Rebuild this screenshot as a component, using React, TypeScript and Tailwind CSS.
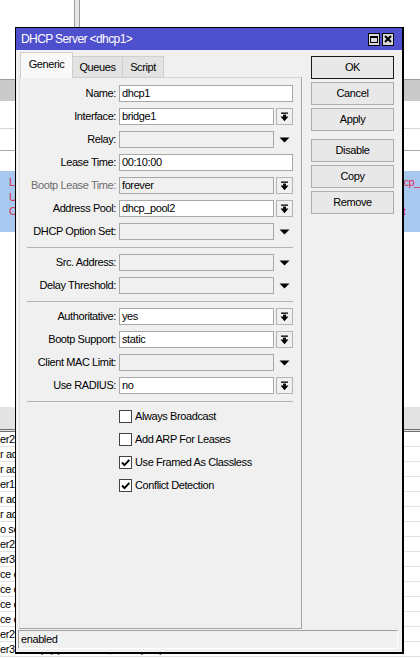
import React from "react";

type Control = "text" | "pick" | "open";
type Item =
  | { kind: "field"; label: string; value?: string; control: Control; off?: boolean; dim?: boolean }
  | { kind: "sep" };

const items: Item[] = [
  { kind: "field", label: "Name", value: "dhcp1", control: "text" },
  { kind: "field", label: "Interface", value: "bridge1", control: "pick" },
  { kind: "field", label: "Relay", control: "open" },
  { kind: "field", label: "Lease Time", value: "00:10:00", control: "text" },
  { kind: "field", label: "Bootp Lease Time", value: "forever", control: "pick", off: true, dim: true },
  { kind: "field", label: "Address Pool", value: "dhcp_pool2", control: "pick" },
  { kind: "field", label: "DHCP Option Set", control: "open" },
  { kind: "sep" },
  { kind: "field", label: "Src. Address", control: "open" },
  { kind: "field", label: "Delay Threshold", control: "open" },
  { kind: "sep" },
  { kind: "field", label: "Authoritative", value: "yes", control: "pick" },
  { kind: "field", label: "Bootp Support", value: "static", control: "pick" },
  { kind: "field", label: "Client MAC Limit", control: "open" },
  { kind: "field", label: "Use RADIUS", value: "no", control: "pick" },
  { kind: "sep" },
];

const flags = [
  { label: "Always Broadcast", on: false },
  { label: "Add ARP For Leases", on: false },
  { label: "Use Framed As Classless", on: true },
  { label: "Conflict Detection", on: true },
];

const logRows = [
  "er2 link up (speed 100M, full duplex)",
  "r added by admin",
  "r added by admin",
  "er1 link up (speed 100M, full duplex)",
  "r added by admin",
  "r added by admin",
  "o settings changed by admin",
  "er2 link down",
  "er3 link down",
  "ce changed by admin",
  "ce changed by admin",
  "ce changed by admin",
  "ce changed by admin",
  "er2 link up (speed 100M, full duplex)",
  "er3 link up (speed 100M, full duplex)",
];

function PickIcon() {
  return (
    <svg width="9" height="10" viewBox="0 0 9 10" className="fill-black">
      <rect x="1" y="0.5" width="7" height="1.3" />
      <rect x="3" y="2.6" width="3" height="2.2" />
      <path d="M0.5 4.6h8L4.5 9.2z" />
    </svg>
  );
}

function Tri() {
  return (
    <svg width="11" height="6" viewBox="0 0 11 6" className="fill-black">
      <path d="M0.5 0.5h10L5.5 5.5z" />
    </svg>
  );
}

function Check() {
  return (
    <svg width="11" height="11" viewBox="0 0 11 11">
      <path d="M2 5.5l2.5 2.6L9.3 2.8" fill="none" stroke="black" strokeWidth="2" />
    </svg>
  );
}

function FieldRow({ f }: { f: Extract<Item, { kind: "field" }> }) {
  const white = f.control === "text" || (f.control === "pick" && !f.off);
  return (
    <div className="flex h-[17px] items-center">
      <span className={`w-[96px] shrink-0 whitespace-nowrap text-right ${f.dim ? "text-[#6d6d6d]" : "text-black"}`}>
        {f.label}:
      </span>
      <div className="ml-[3px] flex w-[174px] gap-[2px]">
        <div
          className={`h-[17px] min-w-0 flex-1 border border-[#a8a8a8] px-[2px] leading-[15px] ${
            white ? "bg-white" : "bg-[#f0f0f0]"
          }`}
        >
          {f.value}
        </div>
        {f.control === "pick" && (
          <div className="grid h-[17px] w-[17px] place-items-center border border-[#b4b4b4] bg-[#f0f0f0]">
            <PickIcon />
          </div>
        )}
        {f.control === "open" && (
          <div className="grid h-[17px] w-[17px] place-items-center">
            <Tri />
          </div>
        )}
      </div>
    </div>
  );
}

function Btn({ label, main, className = "" }: { label: string; main?: boolean; className?: string }) {
  return (
    <div
      className={`grid h-[23px] w-[83px] place-items-center border bg-[#e8e8e8] leading-none ${
        main ? "border-[#1a1a1a]" : "border-[#adadad]"
      } ${className}`}
    >
      {label}
    </div>
  );
}

function Dialog() {
  return (
    <div className="absolute left-[15px] top-[27px] flex h-[627px] w-[389px] flex-col border-l border-t border-r-2 border-b-2 border-black bg-[#f0f0f0]">
      {/* title bar */}
      <div className="flex h-[22px] shrink-0 items-center bg-[#4f50cd] pl-[5px] pr-[8px]">
        <span className="flex-1 text-[12px] tracking-[-0.6px] text-white">{"DHCP Server <dhcp1>"}</span>
        <div className="flex gap-[2px]">
          <span className="grid h-[13px] w-[12px] place-items-center border border-black bg-[#d9d9d9]">
            <span className="h-[7px] w-[8px] border border-t-2 border-black" />
          </span>
          <span className="grid h-[13px] w-[12px] place-items-center border border-black bg-[#d9d9d9]">
            <svg width="8" height="8" viewBox="0 0 8 8">
              <path d="M1 1l6 6M7 1L1 7" stroke="black" strokeWidth="2" />
            </svg>
          </span>
        </div>
      </div>

      <div className="flex min-h-0 flex-1 flex-col pt-[2px]">
        <div className="flex min-h-0 flex-1">
          {/* tabs + generic panel */}
          <div className="ml-[3px] flex w-[283px] flex-col">
            <div className="relative z-10 -mb-px flex h-[26px] items-end pl-px">
              <div className="grid h-[26px] w-[53px] place-items-center border border-b-0 border-[#cfcfcf] bg-[#f9f9f9] pb-[2px]">
                Generic
              </div>
              <div className="grid h-[22px] w-[50px] place-items-center border border-l-0 border-[#cfcfcf] bg-[#e3e3e3]">
                Queues
              </div>
              <div className="grid h-[22px] w-[41px] place-items-center border border-l-0 border-[#cfcfcf] bg-[#e3e3e3]">
                Script
              </div>
            </div>
            <div className="flex flex-1 flex-col gap-[6px] border border-l-[#dedede] border-t-[#d4d4d4] border-r-[#a3a3a3] border-b-[#a3a3a3] pt-[7px]">
              {items.map((it, i) =>
                it.kind === "sep" ? (
                  <div key={i} className="ml-[7px] mr-[8px] mt-px h-px bg-[#b4b4b4]" />
                ) : (
                  <FieldRow key={i} f={it} />
                )
              )}
              {flags.map((c) => (
                <div key={c.label} className="flex h-[17px] items-center pl-[99px]">
                  <span className="grid h-[13px] w-[13px] place-items-center border border-[#444] bg-white">
                    {c.on && <Check />}
                  </span>
                  <span className="ml-[3px] whitespace-nowrap">{c.label}</span>
                </div>
              ))}
            </div>
          </div>

          {/* buttons */}
          <div className="ml-[9px] flex flex-col gap-[3px] pt-[4px]">
            <Btn label="OK" main />
            <Btn label="Cancel" />
            <Btn label="Apply" />
            <Btn label="Disable" className="mt-[5px]" />
            <Btn label="Copy" />
            <Btn label="Remove" />
          </div>
        </div>

        {/* status bar */}
        <div className="mb-[3px] ml-[2px] mr-[4px] mt-px h-[19px] shrink-0 border border-l-[#a0a0a0] border-t-[#a0a0a0] border-r-white border-b-white pl-[2px] leading-[17px]">
          enabled
        </div>
      </div>
    </div>
  );
}

export default function App() {
  return (
    <div className="relative h-[659px] w-[420px] overflow-hidden bg-white font-['Liberation_Sans',Arial,sans-serif] text-[11px] tracking-[-0.4px] text-black">
      {/* window behind */}
      <div className="h-[79px]">
        <div className="ml-[74px] h-full w-[6px] border-x border-[#9a9a9a] bg-[#e6e6e6]" />
      </div>
      <div className="h-[22px] border-t border-[#9c9c9c] bg-[#c9c9c9]" />
      <div className="h-[28px] border-b border-[#d6d6d6]" />
      <div className="h-[22px] border-b border-[#a9a9a9]" />
      <div className="h-[20px]" />
      <div className="flex h-[61px] bg-[#a8c8f0] pt-[4px] leading-[14.5px] text-[#dd2a4c]">
        <div className="w-[392px] shrink-0 pl-[9px]">
          <div>Lease Time</div>
          <div>Use RADIUS</div>
          <div>Conflict Detection</div>
        </div>
        <div className="whitespace-nowrap">
          <div>dhcp_pool2</div>
          <div>&nbsp;</div>
          <div>est</div>
        </div>
      </div>
      <div className="h-[175px]" />
      <div className="h-[25px] border-b-[3px] border-double border-[#6f6f6f] bg-[#e3e3e3]" />
      {logRows.map((r, i) => (
        <div key={i} className="h-[15px] whitespace-nowrap border-b border-[#e2e2e2] leading-[14px]">
          {r}
        </div>
      ))}

      <Dialog />
    </div>
  );
}
